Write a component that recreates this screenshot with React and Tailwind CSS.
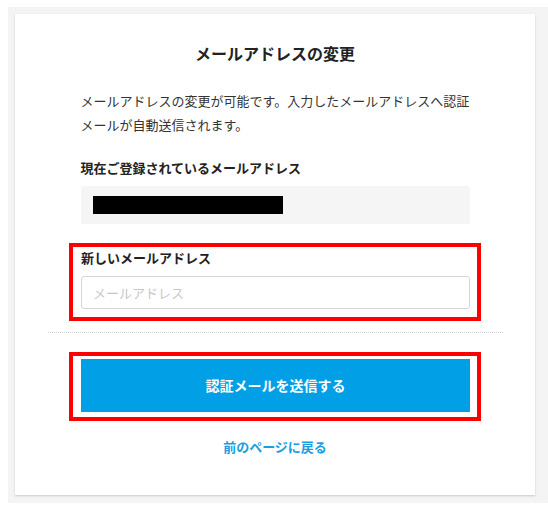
import React from 'react';

// Email change form with red highlight annotations
const font = "font-['Noto_Sans_CJK_JP','Noto_Sans',sans-serif]";

export default function App() {
    return (
        <div className={`bg-white w-[548px] h-[509px] pl-[8px] pt-[7px] ${font}`}>
            <div className="bg-[#f3f4f3] pl-[7px] pt-[7px] pb-[8px]">
                <div className="w-[520px] bg-white shadow-[0_1px_2px_rgba(0,0,0,0.18)] pt-[27px] pb-[38px]">
                    <h1 className="text-center text-[16px] leading-[24px] font-bold text-[#222]">
                        メールアドレスの変更
                    </h1>

                    <div className="w-[389px] mx-auto">
                        <p className="mt-[24px] text-[13px] leading-[24px] text-[#333]">
                            メールアドレスの変更が可能です。入力したメールアドレスへ認証メールが自動送信されます。
                        </p>

                        {/* Current address */}
                        <div className="mt-[21px] text-[13px] leading-[20px] font-bold text-[#222]">
                            現在ご登録されているメールアドレス
                        </div>
                        <div className="mt-[8px] h-[38px] rounded-[3px] bg-[#f4f5f4] px-[12px] flex items-center">
                            <div className="w-[190px] h-[18px] bg-black" />
                        </div>
                    </div>

                    {/* New address (highlighted) */}
                    <div className="mt-[19px] mx-auto w-[412px] border-4 border-[#f00] pl-[8px] pr-[7px] pt-[1px] pb-[8px]">
                        <div className="text-[13px] leading-[20px] font-bold text-[#222]">
                            新しいメールアドレス
                        </div>
                        <input
                            type="text"
                            placeholder="メールアドレス"
                            className="mt-[8px] block w-full h-[33px] rounded-[3px] border border-[#d6d6d6] bg-white px-[11px] text-[13px] text-[#333] placeholder:text-[#c8c8c8] outline-none"
                        />
                    </div>

                    <div className="mt-[11px] mx-auto w-[455px] border-t border-dotted border-[#cfcfcf]" />

                    {/* Submit (highlighted) */}
                    <div className="mt-[19px] mx-auto w-[412px] border-4 border-[#f00] pl-[8px] pr-[7px] pt-[3px] pb-[5px]">
                        <button className="w-full h-[53px] bg-[#009fe6] text-white text-[14px] font-bold">
                            認証メールを送信する
                        </button>
                    </div>

                    <div className="mt-[16px] text-center text-[13px] leading-[20px] font-bold text-[#1b9de2]">
                        前のページに戻る
                    </div>
                </div>
            </div>
        </div>
    );
}
